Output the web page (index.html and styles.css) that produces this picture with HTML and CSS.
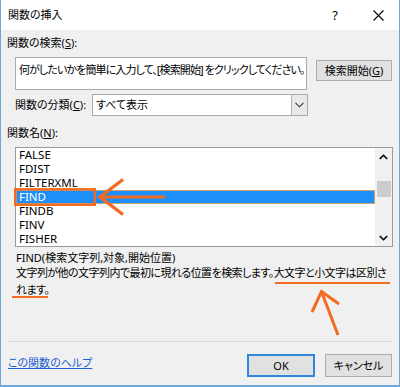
FILE: index.html
```html
<!DOCTYPE html>
<html lang="ja">
<head>
<meta charset="utf-8">
<title>関数の挿入</title>
<link rel="stylesheet" href="styles.css">
</head>
<body>
<div class="window">
  <div class="titlebar">
    <span class="title">関数の挿入</span>
    <span class="tb-help">?</span>
    <span class="tb-close"><svg width="11" height="11" viewBox="0 0 11 11"><path d="M0.5 0.5L10.5 10.5M10.5 0.5L0.5 10.5" stroke="#000" stroke-width="1.1" fill="none"/></svg></span>
  </div>
  <div class="body">
    <div class="lbl">関数の検索(<u>S</u>):</div>
    <div class="search-row">
      <div class="searchbox">何がしたいかを簡単に入力して、[検索開始] をクリックしてください。</div>
      <div class="btn btn-search">検索開始(<u>G</u>)</div>
    </div>
    <div class="cat-row">
      <span class="cat-lbl">関数の分類(<u>C</u>):</span>
      <div class="select">
        <span class="select-val">すべて表示</span>
        <span class="select-btn"><svg width="9" height="6" viewBox="0 0 9 6"><path d="M0.5 0.8L4.5 4.8L8.5 0.8" stroke="#333" stroke-width="1.1" fill="none"/></svg></span>
      </div>
    </div>
    <div class="lbl lbl-names">関数名(<u>N</u>):</div>
    <div class="list">
      <div class="items">
        <div class="item">FALSE</div>
        <div class="item">FDIST</div>
        <div class="item">FILTERXML</div>
        <div class="item item-sel">FIND</div>
        <div class="item">FINDB</div>
        <div class="item">FINV</div>
        <div class="item">FISHER</div>
      </div>
      <div class="scrollbar">
        <span class="sb-arrow"><svg width="9" height="6" viewBox="0 0 9 6"><path d="M0.8 5L4.5 1.3L8.2 5" stroke="#000" stroke-width="1.6" fill="none"/></svg></span>
        <div class="sb-track"><div class="sb-thumb"></div></div>
        <span class="sb-arrow"><svg width="9" height="6" viewBox="0 0 9 6"><path d="M0.8 1L4.5 4.7L8.2 1" stroke="#000" stroke-width="1.6" fill="none"/></svg></span>
      </div>
    </div>
    <div class="syntax">FIND(検索文字列,対象,開始位置)</div>
    <div class="desc">文字列が他の文字列内で最初に現れる位置を検索します。大文字と小文字は区別さ<br>れます。</div>
    <div class="sep"></div>
    <div class="footer">
      <a class="help" href="#">この関数のヘルプ</a>
      <div class="btn btn-ok">OK</div>
      <div class="btn btn-cancel">キャンセル</div>
    </div>
  </div>
  <svg class="annot" width="400" height="387" viewBox="0 0 400 387">
    <g stroke="#f26b21" fill="none" stroke-linecap="butt">
      <rect x="15.2" y="189.3" width="79.6" height="15.5" stroke-width="2.4"/>
      <line x1="101" y1="197" x2="165" y2="197" stroke-width="3.2"/>
      <polyline points="123,179.5 100,197 123,214.5" stroke-width="3.4"/>
      <line x1="275" y1="283" x2="390" y2="283" stroke-width="2.2"/>
      <line x1="12" y1="297" x2="48" y2="297" stroke-width="2.2"/>
      <line x1="322" y1="293" x2="338" y2="335" stroke-width="3"/>
      <polyline points="312,312 321.5,291.5 339,304" stroke-width="3"/>
    </g>
  </svg>
</div>
</body>
</html>
```

FILE: styles.css
```css
* { box-sizing: border-box; }
html, body { margin: 0; padding: 0; }
body {
  width: 400px;
  height: 387px;
  overflow: hidden;
  background: #ffffff;
  font-family: "Noto Sans", "Noto Sans CJK JP", sans-serif;
  font-size: 11px;
  color: #000;
  font-feature-settings: "palt";
}
u { text-decoration: underline; text-underline-offset: 1px; }

.window {
  position: relative;
  width: 400px;
  height: 387px;
  border-left: 1px solid #6ea8de;
  border-right: 1px solid #6ea8de;
  border-bottom: 2px solid #6ea8de;
  display: flex;
  flex-direction: column;
}

.titlebar {
  height: 30px;
  background: #fff;
  display: flex;
  align-items: center;
  padding-left: 7px;
  flex: none;
}
.title { font-size: 11px; line-height: 14px; flex: 1; }
.tb-help { font-size: 13px; width: 16px; margin-right: 30px; text-align: center; }
.tb-close { width: 11px; height: 11px; margin-right: 15px; display: flex; }

.body {
  flex: 1;
  background: #f0f0f0;
  padding: 0 6px 0 6px;
  display: flex;
  flex-direction: column;
}

.lbl { margin-top: 6px; line-height: 14px; height: 14px; }
.lbl-names { margin-top: 10px; }

.search-row {
  margin-top: 7px;
  padding-left: 8px;
  display: flex;
  align-items: flex-start;
  gap: 9px;
}
.searchbox {
  width: 292px;
  height: 33px;
  background: #fff;
  border: 1px solid #a9a9a9;
  padding: 5px 0 0 3px;
  line-height: 14px;
  letter-spacing: -0.9px;
  white-space: nowrap;
  overflow: hidden;
}
.btn {
  background: #e1e1e1;
  border: 1px solid #adadad;
  display: flex;
  align-items: center;
  justify-content: center;
  line-height: 14px;
}
.btn-search { width: 76px; height: 21px; margin-top: 3px; }

.cat-row {
  margin-top: 4px;
  padding-left: 8px;
  display: flex;
  align-items: center;
  height: 22px;
}
.cat-lbl { width: 77px; line-height: 14px; }
.select {
  width: 216px;
  height: 22px;
  background: #fff;
  border: 1px solid #a9a9a9;
  display: flex;
}
.select-val { flex: 1; padding-left: 3px; line-height: 20px; }
.select-btn {
  width: 16px;
  background: #e9e9e9;
  border-left: 1px solid #b5b5b5;
  display: flex;
  align-items: center;
  justify-content: center;
}

.list {
  margin-top: 7px;
  margin-left: 8px;
  width: 378px;
  height: 100px;
  background: #fff;
  border: 1px solid #9a9a9a;
  display: flex;
}
.items { flex: 1; }
.item {
  height: 14px;
  line-height: 14px;
  padding-left: 3px;
  font-size: 11.5px;
}
.item-sel {
  background: #1e8ff8;
  color: #fff;
  box-shadow: inset 0 0 0 1px #c9a36a;
}
.scrollbar {
  width: 17px;
  background: #f0f0f0;
  display: flex;
  flex-direction: column;
}
.sb-arrow {
  height: 17px;
  display: flex;
  align-items: center;
  justify-content: center;
}
.sb-track { flex: 1; padding: 16px 1px 0 2px; }
.sb-thumb { height: 16px; background: #cdcdcd; }

.syntax { margin-top: 4px; padding-left: 9px; line-height: 14px; }
.desc { padding-left: 9px; line-height: 17px; margin-top: -1px; white-space: nowrap; letter-spacing: -0.55px; }

.sep {
  margin-top: 43px;
  margin-left: 1px;
  width: 384px;
  height: 1px;
  background: #d9d9d9;
}

.footer {
  margin-top: 12px;
  display: flex;
  align-items: flex-start;
  height: 23px;
}
.help {
  flex: 1;
  margin-top: 2px;
  padding-left: 1px;
  color: #1a5fd1;
  text-decoration: underline;
  line-height: 14px;
}
.btn-ok { width: 68px; height: 23px; border: 2px solid #2f86dc; margin-right: 10px; }
.btn-cancel { width: 67px; height: 23px; margin-right: 1px; }

.annot {
  position: absolute;
  left: -1px;
  top: 0;
  pointer-events: none;
}
```
